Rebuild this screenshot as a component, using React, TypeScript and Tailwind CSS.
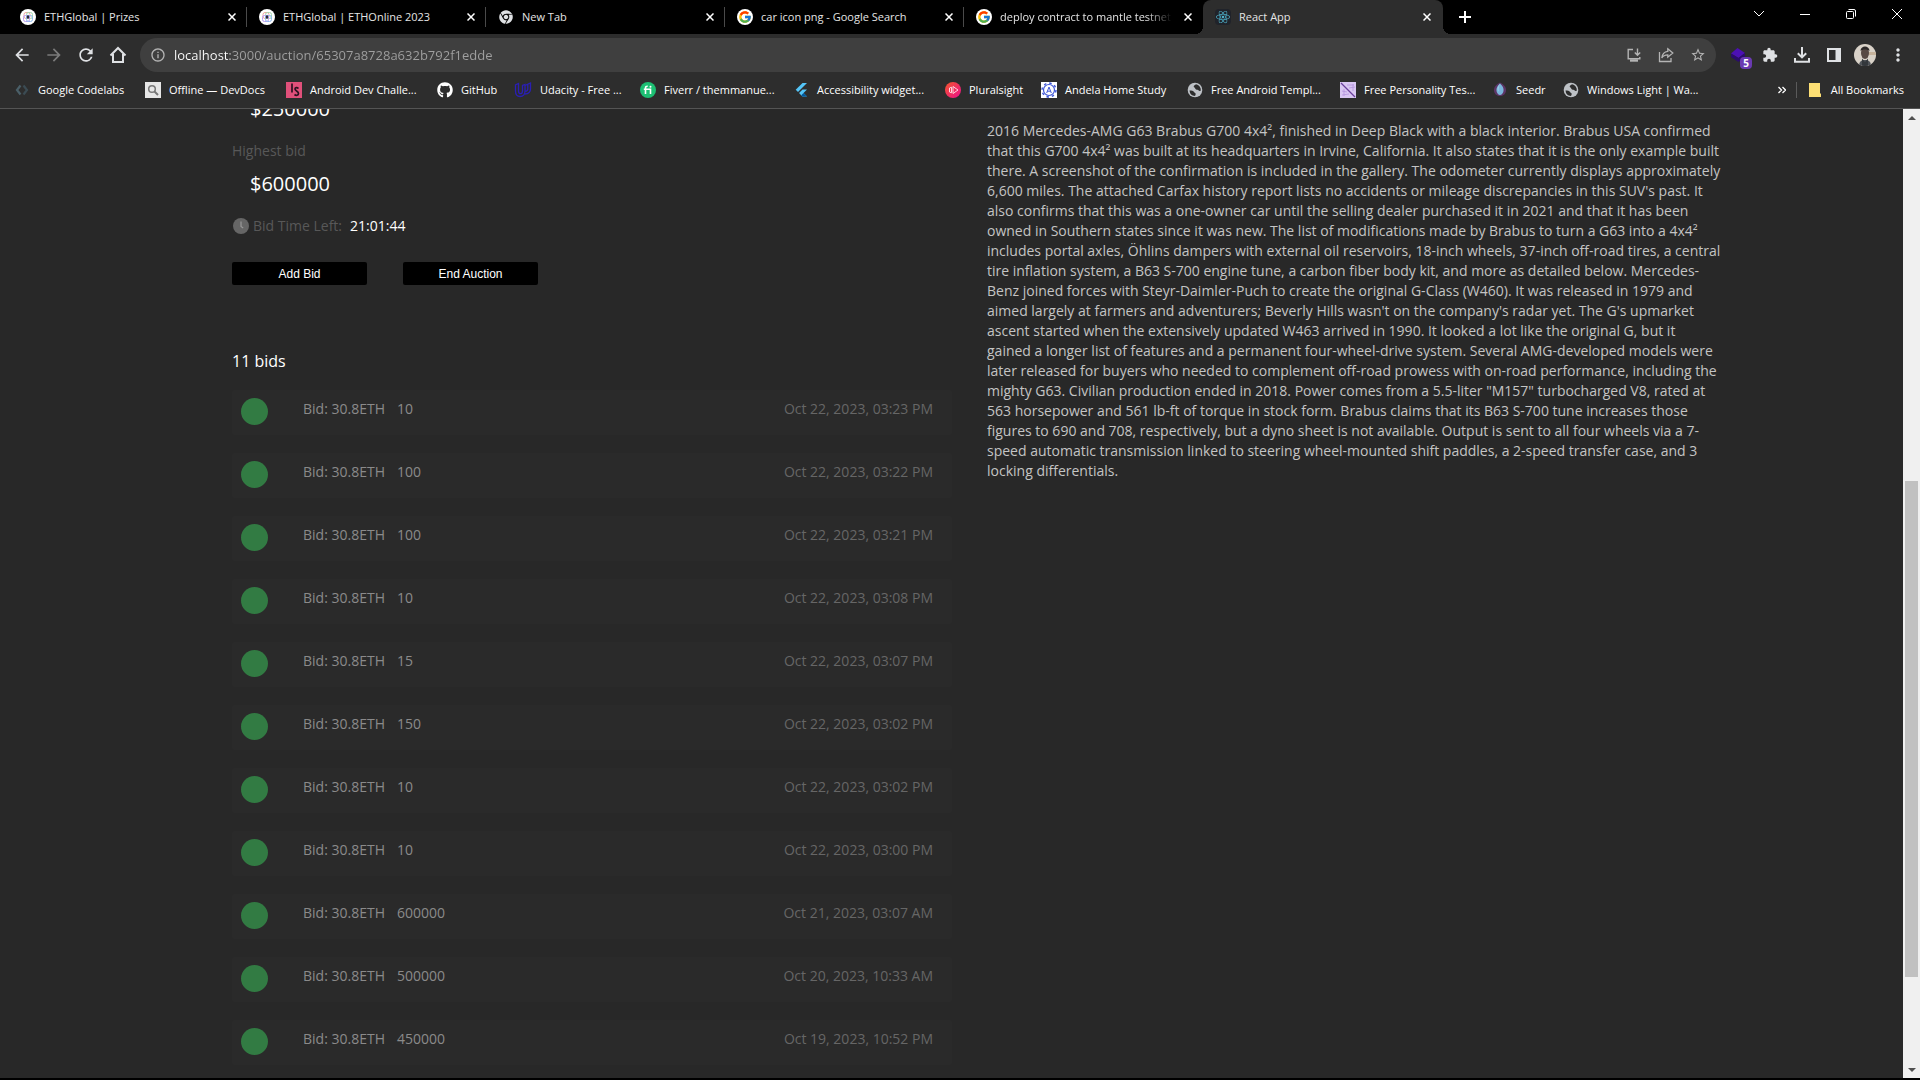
import type { ReactNode } from "react";
import { FaChrome, FaGithub, FaReact } from "react-icons/fa";
import { FcGoogle } from "react-icons/fc";
import {
  MdArrowBack,
  MdArrowForward,
  MdExtension,
  MdInfoOutline,
  MdMoreVert,
  MdRefresh,
  MdStarBorder,
} from "react-icons/md";

/* ---------- favicons ---------- */

const EthGlobalIcon = () => (
  <svg viewBox="0 0 16 16" className="size-4 shrink-0" fill="none">
    <circle cx="8" cy="8" r="8" fill="#fff" />
    <rect x="4" y="3.5" width="6" height="6" rx="2" stroke="#f0a8a0" />
    <rect x="6.5" y="3.5" width="6" height="6" rx="2" stroke="#a4d8b0" />
    <rect x="3.5" y="6.5" width="6" height="6" rx="2" stroke="#b89af0" />
    <rect x="6.5" y="6.5" width="6" height="6" rx="2" stroke="#8cb8f0" />
    <path d="M8 5.8 9.5 8 8 10.2 6.5 8z" fill="#23233a" />
  </svg>
);

const ChromeIcon = () => (
  <span className="flex size-4 shrink-0 items-center justify-center">
    <FaChrome className="size-3.5 text-[#dfe1e4]" />
  </span>
);

const GoogleIcon = () => (
  <span className="flex size-4 shrink-0 items-center justify-center rounded-full bg-white">
    <FcGoogle className="size-3.5" />
  </span>
);

const ReactIcon = () => (
  <span className="flex size-4 shrink-0 items-center justify-center rounded-sm bg-[#20232a]">
    <FaReact className="size-3.5 text-[#4fb3cc]" />
  </span>
);

const CodelabsIcon = () => (
  <svg viewBox="0 0 16 16" className="size-4 shrink-0" fill="none" strokeWidth="2.2">
    <path d="M6.5 3.5 3 8l3.5 4.5" stroke="#4a5f68" />
    <path d="M9.5 3.5 13 8l-3.5 4.5" stroke="#3b4b53" />
  </svg>
);

const DevDocsIcon = () => (
  <svg viewBox="0 0 16 16" className="size-4 shrink-0" fill="none">
    <rect width="16" height="16" fill="#e6e6e6" />
    <circle cx="7" cy="7" r="3.3" stroke="#777" strokeWidth="1.5" />
    <path d="m9.5 9.5 3.5 3.5" stroke="#777" strokeWidth="2" />
  </svg>
);

const AndroidChallengeIcon = () => (
  <svg viewBox="0 0 16 16" className="size-4 shrink-0" fill="none">
    <rect width="16" height="16" fill="#e0507a" />
    <path d="M6 1.5v9M12.5 6.5c-1.5-1.5-3.5-1-3.5.5 0 2 3.500 2 3.500 4.500 0 2-2.500 2.300-4 1" stroke="#2a1220" strokeWidth="1.7" />
  </svg>
);

const UdacityIcon = () => (
  <svg viewBox="0 0 18 16" className="h-4 w-[18px] shrink-0" fill="none" stroke="#2a1fb4" strokeWidth="1.3">
    <path d="M1.500 3v6c0 3.500 1.500 5.500 4.500 5.500s5-2 5-5.500V2.500L8.500 3.500V9c0 1.700-.800 2.700-2 2.700S4.500 10.700 4.500 9V1.500z" />
    <path d="M11 3.500 16.500 1v6c0 3-2 4.800-5.500 5M13.800 2.500V7c0 1.200-.800 2.200-2.800 2.400" />
  </svg>
);

const FiverrIcon = () => (
  <svg viewBox="0 0 16 16" className="size-4 shrink-0" fill="none">
    <circle cx="8" cy="8" r="8" fill="#1dbf73" />
    <path d="M5.5 12V6c0-1.200.7-1.800 2.200-1.700M3.800 7.200H10.500V12" stroke="#fff" strokeWidth="1.6" />
    <circle cx="10.5" cy="4.8" r="1" fill="#fff" />
  </svg>
);

const FlutterIcon = () => (
  <svg viewBox="0 0 16 16" className="size-4 shrink-0">
    <path d="M9.5 1H14L5 10 2.700 7.700z" fill="#54c5f8" />
    <path d="M9.5 7.500H14L10.500 11l3.500 3.500H9.500L6 11z" fill="#54c5f8" />
    <path d="m8.300 13.300 2.200-2.300 3.500 3.500H9.500z" fill="#01579b" />
  </svg>
);

const PluralsightIcon = () => (
  <svg viewBox="0 0 16 16" className="size-4 shrink-0" fill="none">
    <defs>
      <linearGradient id="pluralsight" x1="0" y1="0" x2="1" y2="1">
        <stop stopColor="#f4562c" />
        <stop offset="1" stopColor="#ec0f8c" />
      </linearGradient>
    </defs>
    <circle cx="8" cy="8" r="8" fill="url(#pluralsight)" />
    <path d="M4.500 6v4l2 .8v-5.600zM8 4.500v7L13 8z" stroke="#ffd5de" strokeWidth="1" />
  </svg>
);

const AndelaIcon = () => (
  <svg viewBox="0 0 16 16" className="size-4 shrink-0" fill="none">
    <rect width="16" height="16" fill="#fff" />
    <circle cx="8" cy="8" r="5.5" stroke="#3d55d6" strokeWidth="1.2" />
    <circle cx="8" cy="8" r="7" stroke="#3d55d6" strokeWidth="1.4" strokeDasharray="2.5 3" />
    <path d="M5.700 11 8 5l2.300 6M6.500 9.200h3" stroke="#3d55d6" />
  </svg>
);

const GlobeIcon = () => (
  <svg viewBox="0 0 16 16" className="size-4 shrink-0">
    <circle cx="8" cy="8" r="7.3" fill="#bdc1c6" />
    <path d="M2.500 8.500c2 0 4 .3 4.500 1.500.5 1 1.700.8 1.700 2 0 .7-.4 1.300-.7 2A6 6 0 0 1 2.500 8.500zM9 2.300c-.7.8-2.300 1-2.300 2.200 0 1 1.300.9 1.500 1.900.2.9 1.300 1.300 2.300 1.300.8 0 1.200 1 2 1.300l1.300-.2A6 6 0 0 0 9 2.300z" fill="#2d2d2d" />
  </svg>
);

const PersonalityIcon = () => (
  <svg viewBox="0 0 16 16" className="size-4 shrink-0" fill="none">
    <rect width="16" height="16" fill="#d9c6f2" />
    <path d="m1 1 14 14" stroke="#6a3f9c" strokeWidth="1.3" />
    <path d="M7 3h7M9 6l6-1M2 9l5 1M2 13l7-1M13 2v7M4 7v7" stroke="#b493dd" strokeWidth=".8" />
  </svg>
);

const SeedrIcon = () => (
  <svg viewBox="0 0 16 16" className="size-4 shrink-0">
    <path d="M8 .5C4.500 2.500 1.500 5 2 9c.5 3 3 5 6 5s5.500-2 6-5c.5-4-2.500-6.500-6-8.500z" fill="#5c3566" />
    <path d="M8 1.500C5.500 4 4 6 4.500 9c.4 2.300 1.800 4 3.500 4s3.200-1.700 3.500-4c.5-3-1-5-3.500-7.500z" fill="#7bb6dc" />
    <path d="M8 1.500C6.500 4 6 7 6.500 9.500 5.500 8 5 6 8 1.500z" fill="#b4e3f0" />
  </svg>
);

/* ---------- toolbar drawings ---------- */

const HomeIcon = () => (
  <svg viewBox="0 0 18 18" className="size-[18px]" fill="none" stroke="currentColor" strokeWidth="2">
    <path d="M1.500 9.500 9 2l7.500 7.500M4 8v8h10V8" />
  </svg>
);

const InstallIcon = () => (
  <svg viewBox="0 0 16 16" className="size-4" fill="none" stroke="currentColor" strokeWidth="1.4">
    <path d="M7 2.500H2.200v9.300h11.600V10M11.500 1.500v6.500M8.800 5.500l2.700 2.700 2.700-2.700" />
    <path d="M4 13.500h8" strokeWidth="2.4" />
  </svg>
);

const ShareIcon = () => (
  <svg viewBox="0 0 16 16" className="size-4" fill="none" stroke="currentColor" strokeWidth="1.3">
    <path d="M1.500 5v9.500H13V11M9.800 1.800l5 4.200-5 4.200V7.800C7 7.800 5 8.600 3.800 11c.4-4 2.700-6.300 6-6.700z" />
  </svg>
);

const ExtensionBadgeIcon = () => (
  <span className="relative flex size-5 items-center">
    <svg viewBox="0 0 16 16" className="size-4">
      <path d="M7.500 1 15 6l-6.500 5L1 6.500z" fill="#4c10b4" />
      <path d="M1 6.500 8.500 11l6.500-5v3.500L8.500 15 1 10z" fill="#2b0b6e" />
    </svg>
    <span className="absolute top-3 left-2.5 flex h-3 w-3 items-center justify-center rounded-sm bg-[#6a3ab2] text-[10px] leading-none font-bold text-white">
      5
    </span>
  </span>
);

const DownloadIcon = () => (
  <svg viewBox="0 0 16 16" className="size-4" fill="none" stroke="currentColor" strokeWidth="2">
    <path d="M8 0v10M3.800 6.200 8 10.400l4.200-4.200M1 11v3.700h14V11" />
  </svg>
);

const SidePanelIcon = () => (
  <svg viewBox="0 0 16 16" className="size-4" fill="none">
    <rect x="2" y="2" width="12" height="12" stroke="currentColor" strokeWidth="2" />
    <path d="M9.500 2H14v12H9.500z" fill="currentColor" />
  </svg>
);

const Avatar = () => (
  <svg viewBox="0 0 22 22" className="size-[22px]">
    <clipPath id="avatar">
      <circle cx="11" cy="11" r="11" />
    </clipPath>
    <g clipPath="url(#avatar)">
      <rect width="22" height="22" fill="#d9d2c8" />
      <path d="M15 8h7v3h-7z" fill="#c6b39c" />
      <path d="M5 22c0-4 2-6 6-6s6 2 6 6z" fill="#4f5358" />
      <ellipse cx="11" cy="9" rx="4" ry="6" fill="#584a44" />
      <path d="M6.500 7c0-6 9-6 9 0-2-2-7-2-9 0z" fill="#2c2828" />
      <path d="M8 14.500 11 18l3-3.500V22H8z" fill="#34383c" />
    </g>
  </svg>
);

const CloseIcon = () => (
  <svg viewBox="0 0 8 8" className="size-2" fill="none" stroke="currentColor" strokeWidth="1.5">
    <path d="m.5.5 7 7m0-7-7 7" />
  </svg>
);

/* ---------- data ---------- */

const tabs: { title: string; icon: ReactNode }[] = [
  { title: "ETHGlobal | Prizes", icon: <EthGlobalIcon /> },
  { title: "ETHGlobal | ETHOnline 2023", icon: <EthGlobalIcon /> },
  { title: "New Tab", icon: <ChromeIcon /> },
  { title: "car icon png - Google Search", icon: <GoogleIcon /> },
  { title: "deploy contract to mantle testnet", icon: <GoogleIcon /> },
];

const bookmarks: { title: string; icon: ReactNode; width: string }[] = [
  { title: "Google Codelabs", icon: <CodelabsIcon />, width: "w-[131px]" },
  { title: "Offline — DevDocs", icon: <DevDocsIcon />, width: "w-[141px]" },
  { title: "Android Dev Challe...", icon: <AndroidChallengeIcon />, width: "w-[151px]" },
  { title: "GitHub", icon: <FaGithub className="size-4 shrink-0 text-white" />, width: "w-[77px]" },
  { title: "Udacity - Free ...", icon: <UdacityIcon />, width: "w-[126px]" },
  { title: "Fiverr / themmanue...", icon: <FiverrIcon />, width: "w-[153px]" },
  { title: "Accessibility widget...", icon: <FlutterIcon />, width: "w-[152px]" },
  { title: "Pluralsight", icon: <PluralsightIcon />, width: "w-[96px]" },
  { title: "Andela Home Study", icon: <AndelaIcon />, width: "w-[146px]" },
  { title: "Free Android Templ...", icon: <GlobeIcon />, width: "w-[153px]" },
  { title: "Free Personality Tes...", icon: <PersonalityIcon />, width: "w-[152px]" },
  { title: "Seedr", icon: <SeedrIcon />, width: "w-[71px]" },
  { title: "Windows Light | Wa...", icon: <GlobeIcon />, width: "w-[150px]" },
];

const bids = [
  { amount: "10", date: "Oct 22, 2023, 03:23 PM" },
  { amount: "100", date: "Oct 22, 2023, 03:22 PM" },
  { amount: "100", date: "Oct 22, 2023, 03:21 PM" },
  { amount: "10", date: "Oct 22, 2023, 03:08 PM" },
  { amount: "15", date: "Oct 22, 2023, 03:07 PM" },
  { amount: "150", date: "Oct 22, 2023, 03:02 PM" },
  { amount: "10", date: "Oct 22, 2023, 03:02 PM" },
  { amount: "10", date: "Oct 22, 2023, 03:00 PM" },
  { amount: "600000", date: "Oct 21, 2023, 03:07 AM" },
  { amount: "500000", date: "Oct 20, 2023, 10:33 AM" },
  { amount: "450000", date: "Oct 19, 2023, 10:52 PM" },
];

const description = `2016 Mercedes-AMG G63 Brabus G700 4x4², finished in Deep Black with a black interior. Brabus USA confirmed
that this G700 4x4² was built at its headquarters in Irvine, California. It also states that it is the only example built
there. A screenshot of the confirmation is included in the gallery. The odometer currently displays approximately
6,600 miles. The attached Carfax history report lists no accidents or mileage discrepancies in this SUV's past. It
also confirms that this was a one-owner car until the selling dealer purchased it in 2021 and that it has been
owned in Southern states since it was new. The list of modifications made by Brabus to turn a G63 into a 4x4²
includes portal axles, Öhlins dampers with external oil reservoirs, 18-inch wheels, 37-inch off-road tires, a central
tire inflation system, a B63 S-700 engine tune, a carbon fiber body kit, and more as detailed below. Mercedes-
Benz joined forces with Steyr-Daimler-Puch to create the original G-Class (W460). It was released in 1979 and
aimed largely at farmers and adventurers; Beverly Hills wasn't on the company's radar yet. The G's upmarket
ascent started when the extensively updated W463 arrived in 1990. It looked a lot like the original G, but it
gained a longer list of features and a permanent four-wheel-drive system. Several AMG-developed models were
later released for buyers who needed to complement off-road prowess with on-road performance, including the
mighty G63. Civilian production ended in 2018. Power comes from a 5.5-liter "M157" turbocharged V8, rated at
563 horsepower and 561 lb-ft of torque in stock form. Brabus claims that its B63 S-700 tune increases those
figures to 690 and 708, respectively, but a dyno sheet is not available. Output is sent to all four wheels via a 7-
speed automatic transmission linked to steering wheel-mounted shift paddles, a 2-speed transfer case, and 3
locking differentials.`;

/* ---------- browser chrome ---------- */

function TabStrip() {
  return (
    <div className="flex h-[34px] shrink-0 bg-black pl-2">
      <div className="flex">
        {tabs.map((tab, i) => (
          <div key={tab.title} className="relative flex w-[239px] items-center pr-[11px] pl-3">
            <button className="flex min-w-0 flex-1 items-center gap-2 text-left">
              {tab.icon}
              <span
                className={
                  i === 4
                    ? "flex-1 overflow-hidden mask-r-from-85% whitespace-nowrap"
                    : "flex-1 overflow-hidden whitespace-nowrap"
                }
              >
                {tab.title}
              </span>
            </button>
            <button aria-label="Close tab" className="ml-3 p-0 text-white">
              <CloseIcon />
            </button>
            {i < 4 && <span className="absolute top-[7px] right-0 h-5 w-px bg-[#4a4a4a]" />}
          </div>
        ))}
        <div className="relative flex w-[240px] items-center rounded-t-lg bg-[#2d2d2d] pr-3 pl-3 before:absolute before:bottom-0 before:-left-2 before:size-2 before:bg-[radial-gradient(circle_at_0_0,#000_8px,#2d2d2d_8px)] after:absolute after:-right-2 after:bottom-0 after:size-2 after:bg-[radial-gradient(circle_at_100%_0,#000_8px,#2d2d2d_8px)]">
          <button className="flex flex-1 items-center gap-2 text-left">
            <ReactIcon />
            <span>React App</span>
          </button>
          <button aria-label="Close tab" className="text-white">
            <CloseIcon />
          </button>
        </div>
      </div>
      <button aria-label="New tab" className="ml-4 text-white">
        <svg viewBox="0 0 12 12" className="size-3" stroke="currentColor" strokeWidth="2">
          <path d="M6 0v12M0 6h12" />
        </svg>
      </button>
      <div className="ml-auto flex h-7 text-white">
        <button aria-label="Search tabs" className="flex w-[46px] items-center justify-center">
          <svg viewBox="0 0 10 10" className="size-2.5" fill="none" stroke="currentColor">
            <path d="m0 2 5 5 5-5" />
          </svg>
        </button>
        <button aria-label="Minimize" className="flex w-[46px] items-center justify-center">
          <svg viewBox="0 0 10 10" className="size-2.5" fill="none" stroke="currentColor">
            <path d="M0 5.500h10" />
          </svg>
        </button>
        <button aria-label="Restore" className="flex w-[46px] items-center justify-center">
          <svg viewBox="0 0 10 10" className="size-2.5" fill="none" stroke="currentColor">
            <rect x=".5" y="2.5" width="7" height="7" rx="1" />
            <path d="M2.500.5H8a1.500 1.500 0 0 1 1.500 1.500v5.500" />
          </svg>
        </button>
        <button aria-label="Close window" className="flex w-[46px] items-center justify-center">
          <svg viewBox="0 0 10 10" className="size-2.5" fill="none" stroke="currentColor">
            <path d="m0 0 10 10M10 0 0 10" />
          </svg>
        </button>
      </div>
    </div>
  );
}

function Toolbar() {
  return (
    <div className="flex h-[38px] shrink-0 items-end bg-[#2d2d2d] text-[#dfe1e4]">
      <div className="flex h-[34px] items-center gap-3 px-3">
        <button aria-label="Back">
          <MdArrowBack className="size-5" />
        </button>
        <button aria-label="Forward" className="text-[#7b7b7b]">
          <MdArrowForward className="size-5" />
        </button>
        <button aria-label="Reload">
          <MdRefresh className="size-5" />
        </button>
        <button aria-label="Home" className="flex size-5 items-center justify-center">
          <HomeIcon />
        </button>
      </div>
      <div className="flex h-[34px] flex-1 items-center rounded-full bg-[#3f3f3f] px-2.5 text-[#b4b4b4]">
        <MdInfoOutline className="size-4" />
        <input
          aria-label="Address"
          type="text"
          readOnly
          value="localhost:3000/auction/65307a8728a632b792f1edde"
          className="ml-2 min-w-0 flex-1 bg-[linear-gradient(90deg,#fff_56px,#a0a0a0_56px)] bg-clip-text pt-px text-[13px] text-transparent outline-none"
        />
        <div className="flex items-center gap-4">
          <button aria-label="Install">
            <InstallIcon />
          </button>
          <button aria-label="Share">
            <ShareIcon />
          </button>
          <button aria-label="Bookmark this page">
            <MdStarBorder className="size-4" />
          </button>
        </div>
      </div>
      <div className="flex h-[34px] items-center pr-3 pl-3.5">
        <button aria-label="Extension">
          <ExtensionBadgeIcon />
        </button>
        <div className="ml-3 flex items-center gap-4">
          <button aria-label="Extensions">
            <MdExtension className="size-4" />
          </button>
          <button aria-label="Downloads">
            <DownloadIcon />
          </button>
          <button aria-label="Side panel">
            <SidePanelIcon />
          </button>
        </div>
        <button aria-label="Profile" className="ml-3">
          <Avatar />
        </button>
        <button aria-label="Menu" className="ml-3">
          <MdMoreVert className="size-5" />
        </button>
      </div>
    </div>
  );
}

function BookmarksBar() {
  return (
    <nav className="flex h-[37px] shrink-0 items-center border-b border-[#545454] bg-[#2d2d2d] pl-3.5 text-white">
      {bookmarks.map((b) => (
        <div key={b.title} className={b.width}>
          <a href="#" className="flex items-center gap-2 whitespace-nowrap">
            {b.icon}
            {b.title}
          </a>
        </div>
      ))}
      <div className="ml-auto flex items-center pr-4">
        <button aria-label="More bookmarks" className="mr-2.5">
          <svg viewBox="0 0 8 8" className="size-2" fill="none" stroke="currentColor" strokeWidth="1.3">
            <path d="M.5 1 3.500 4l-3 3M4.500 1l3 3-3 3" />
          </svg>
        </button>
        <span className="mr-3 h-4 w-px bg-[#5a5a5a]" />
        <a href="#" className="flex items-center gap-2.5 whitespace-nowrap">
          <svg viewBox="0 0 12 14" className="h-3.5 w-3">
            <path d="M0 0h11v10l1 1v3H0z" fill="#fddf74" />
          </svg>
          All Bookmarks
        </a>
      </div>
    </nav>
  );
}

function Scrollbar() {
  return (
    <div className="flex w-[17px] shrink-0 flex-col items-center bg-[#f0f0f0] text-[#505050]">
      <button aria-label="Scroll up" className="flex h-[17px] w-full items-center justify-center">
        <svg viewBox="0 0 8 4" className="h-1 w-2" fill="currentColor">
          <path d="M0 4 4 0l4 4z" />
        </svg>
      </button>
      <div className="flex-[355]" />
      <div className="w-[13px] flex-[495] bg-[#c1c1c1]" />
      <div className="flex-[84]" />
      <button aria-label="Scroll down" className="flex h-[17px] w-full items-center justify-center">
        <svg viewBox="0 0 8 4" className="h-1 w-2" fill="currentColor">
          <path d="M0 0h8L4 4z" />
        </svg>
      </button>
    </div>
  );
}

/* ---------- page ---------- */

function AuctionPage() {
  return (
    <main className="flex min-w-0 flex-1 gap-[35px] overflow-hidden bg-[#282828] pr-40 pl-[232px] text-sm leading-5">
      <section className="flex-[720]">
        <p className="-mt-3.5 pl-[18px] text-xl leading-7 text-white">$250000</p>
        <h3 className="mt-[18px] text-[#585858]">Highest bid</h3>
        <p className="mt-[9px] pl-[18px] text-xl leading-7 text-white">$600000</p>
        <p className="mt-[18px] flex items-center text-[#585858]">
          <svg viewBox="0 0 16 16" className="mr-1 ml-px size-4" fill="none">
            <circle cx="8" cy="8" r="8" fill="#666" />
            <path d="M8 3.500V8.500l2.200 1.500" stroke="#999" strokeWidth="1.2" />
          </svg>
          Bid Time Left:
          <span className="ml-2 text-white">21:01:44</span>
        </p>
        <div className="mt-[26px] flex gap-9 font-['Liberation_Sans'] text-xs text-white">
          <button className="h-[23px] w-[135px] rounded-xs bg-black">Add Bid</button>
          <button className="h-[23px] w-[135px] rounded-xs bg-black">End Auction</button>
        </div>
        <h2 className="mt-16 text-base leading-6 text-white">11 bids</h2>
        <ul className="mt-[17px] flex flex-col gap-[18px]">
          {bids.map((bid) => (
            <li
              key={bid.date}
              className="flex h-[45px] items-start rounded-xs bg-[#2a2a2a] pt-2 pr-[19px] pl-[9px]"
            >
              <span className="mr-[35px] size-[27px] rounded-full bg-[#327b43]" />
              <span className="mt-px text-[#8a8a8a]">Bid: 30.8ETH</span>
              <span className="mt-px ml-3 text-[#8a8a8a]">{bid.amount}</span>
              <time className="mt-px ml-auto text-[#666]">{bid.date}</time>
            </li>
          ))}
        </ul>
      </section>
      <section className="flex-[756]">
        <p className="mt-3 whitespace-pre-line text-[#c4c4c4]">{description}</p>
      </section>
    </main>
  );
}

export default function App() {
  return (
    <div className="flex h-screen flex-col overflow-hidden bg-black pb-0.5 font-['Open_Sans','Noto_Sans',sans-serif] text-[11px] text-[#e4e4e4]">
      <TabStrip />
      <Toolbar />
      <BookmarksBar />
      <div className="flex min-h-0 flex-1">
        <AuctionPage />
        <Scrollbar />
      </div>
    </div>
  );
}
